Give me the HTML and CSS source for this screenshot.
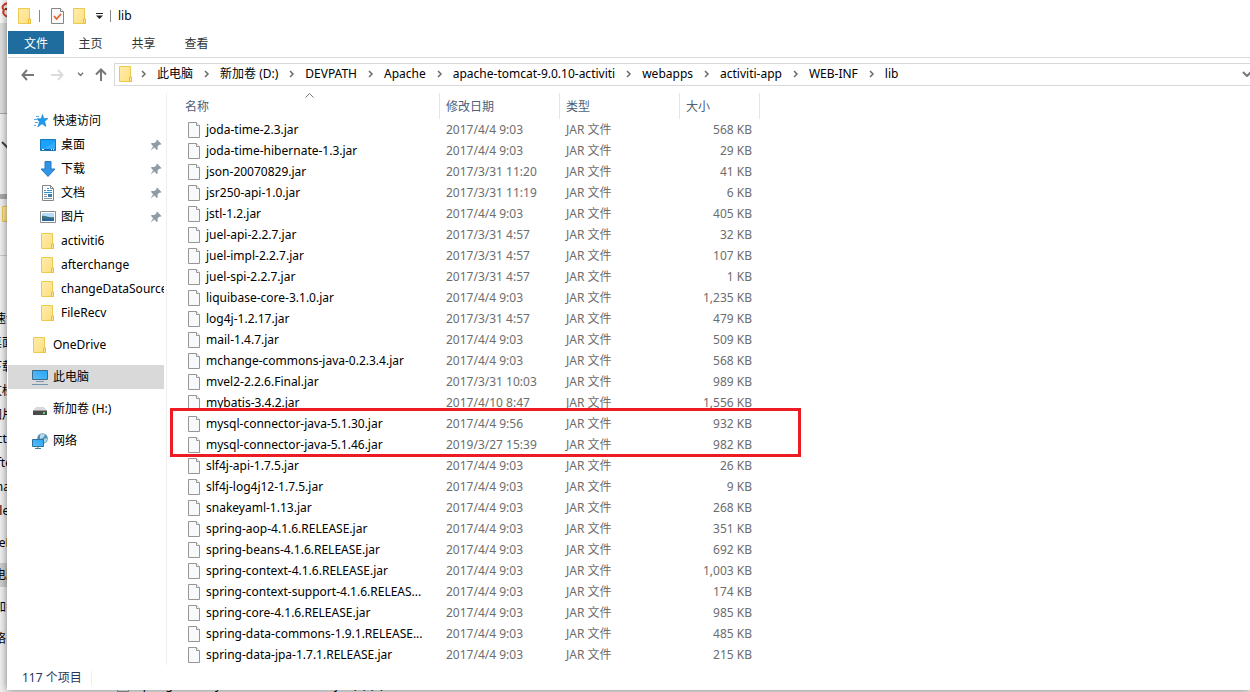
FILE: index.html
```
<!DOCTYPE html>
<html lang="zh-CN">
<head>
<meta charset="utf-8">
<title>lib</title>
<link rel="stylesheet" href="styles.css">
</head>
<body>
<svg class="defs" aria-hidden="true">
  <defs>
    <linearGradient id="g-folder" x1="0" y1="0" x2="1" y2="1"><stop offset="0" stop-color="#ffecac"/><stop offset="1" stop-color="#fedf7e"/></linearGradient>
    <linearGradient id="g-screen" x1="0" y1="1" x2="1" y2="0"><stop offset="0" stop-color="#5bbdf8"/><stop offset="1" stop-color="#27a6f5"/></linearGradient>
  </defs>
  <symbol id="folder" viewBox="0 0 14 16"><path d="M.5.5h11v10.500h1v4.500h-12z" fill="url(#g-folder)" stroke="#ecc94f"/><path d="M10.500 15.500v-4.500h2v4.500z" fill="#ffe79a" stroke="#e8bf3c"/></symbol>
  <symbol id="file" viewBox="0 0 12 16"><path d="M.5.5h8l3 3v12H.5z" fill="#f8f9fa" stroke="#969696"/><path d="M8.500.5v3h3" fill="#fff" stroke="#969696"/></symbol>
  <symbol id="chev" viewBox="0 0 6 8"><path d="M1 1l3 3-3 3" fill="none" stroke="#6b6b6b" stroke-width="1.500"/></symbol>
  <symbol id="pin" viewBox="0 0 12 12"><path d="M7 .5l4.500 4.500-1.200.8-1-.1-1.800 1.800.2 2.700-1 .8-2.300-2.500L.5 11.500 3.200 7.200.8 4.800l1-.9 2.700.1 2.100-1.700-.3-1z" fill="#8f9ba5"/></symbol>
</svg>

<div class="backdrop" aria-hidden="true">
  <div class="back-title"><svg width="16" height="20" viewBox="0 0 16 20"><path d="M8 3C3 4 1 7 4 10c-2 3 0 6 5 7" fill="#fff" stroke="#d6402c" stroke-width="2"/><path d="M5 9h8" stroke="#8c3a1e" stroke-width="2"/></svg></div>
  <div class="back-ribbon"></div>
  <div class="back-tools"><svg width="14" height="8" viewBox="0 0 14 8"><path d="M2 1l5 5 5-5" fill="none" stroke="#444" stroke-width="2"/></svg></div>
  <div class="back-address"><svg width="14" height="16"><use href="#folder"/></svg></div>
  <div class="back-nav">
    <span>快速访问</span><span class="sub">桌面</span><span class="sub">下载</span><span class="sub">文档</span><span class="sub">图片</span><span class="sub">activiti6</span><span class="sub">afterchange</span><span class="sub">changeDataSource</span><span class="sub">FileRecv</span>
    <span class="top">OneDrive</span><span class="top current">此电脑</span><span class="top">新加卷 (H:)</span><span class="top">网络</span>
  </div>
  <div class="back-foot"><svg width="12" height="16"><use href="#file"/></svg><span>spring-security-core-3.2.0.RELEASE.jar (1) (2)</span></div>
</div>

<div class="window">
  <header class="titlebar">
    <svg width="14" height="16"><use href="#folder"/></svg>
    <i class="sep"></i>
    <button class="icon-btn check" aria-label="属性"><svg width="13" height="16" viewBox="0 0 13 16"><path d="M.5.5h9l3 3v12H.5z" fill="#fafafa" stroke="#858585"/><path d="M9.500.5v3h3" fill="#fff" stroke="#858585"/><path d="M3 8l2.500 3L10 6" fill="none" stroke="#e8622c" stroke-width="1.800"/></svg></button>
    <button class="icon-btn" aria-label="新建文件夹"><svg width="14" height="16"><use href="#folder"/></svg></button>
    <button class="icon-btn more" aria-label="自定义快速访问工具栏"><svg width="7" height="6" viewBox="0 0 7 6"><path d="M0 .5h7" stroke="#222"/><path d="M0 2.500h7L3.500 6z" fill="#222"/></svg></button>
    <i class="sep"></i>
    <h1>lib</h1>
  </header>
  <nav class="tabs">
    <button class="active">文件</button><button>主页</button><button>共享</button><button>查看</button>
  </nav>
  <div class="address-row">
    <div class="history">
      <button aria-label="后退"><svg width="13" height="12" viewBox="0 0 13 12"><path d="M6 1L1.500 6 6 11M1.500 6H13" fill="none" stroke="#777" stroke-width="2"/></svg></button>
      <button class="forward" aria-label="前进"><svg width="13" height="12" viewBox="0 0 13 12"><path d="M7 1l4.500 5L7 11M0 6h11.500" fill="none" stroke="#dcdcdc" stroke-width="2"/></svg></button>
      <button class="recent" aria-label="最近位置"><svg width="7" height="5" viewBox="0 0 7 5"><path d="M1 .8l2.500 2.700L6 .8" fill="none" stroke="#777" stroke-width="1.500"/></svg></button>
      <button class="up" aria-label="上移"><svg width="12" height="13" viewBox="0 0 12 13"><path d="M1 6.500L6 1.500l5 5M6 1.500V13" fill="none" stroke="#777" stroke-width="2"/></svg></button>
    </div>
    <div class="address">
      <svg class="loc" width="14" height="16"><use href="#folder"/></svg>
      <svg class="chev" width="6" height="8"><use href="#chev"/></svg><a href="#">此电脑</a>
      <svg class="chev" width="6" height="8"><use href="#chev"/></svg><a href="#">新加卷 (D:)</a>
      <svg class="chev" width="6" height="8"><use href="#chev"/></svg><a href="#">DEVPATH</a>
      <svg class="chev" width="6" height="8"><use href="#chev"/></svg><a href="#">Apache</a>
      <svg class="chev" width="6" height="8"><use href="#chev"/></svg><a href="#">apache-tomcat-9.0.10-activiti</a>
      <svg class="chev" width="6" height="8"><use href="#chev"/></svg><a href="#">webapps</a>
      <svg class="chev" width="6" height="8"><use href="#chev"/></svg><a href="#">activiti-app</a>
      <svg class="chev" width="6" height="8"><use href="#chev"/></svg><a href="#">WEB-INF</a>
      <svg class="chev" width="6" height="8"><use href="#chev"/></svg><a href="#">lib</a>
      <button class="drop" aria-label="以前的位置"><svg width="8" height="6" viewBox="0 0 8 6"><path d="M1 1l4 4 4-4" fill="none" stroke="#777" stroke-width="2"/></svg></button>
    </div>
  </div>
  <div class="content">
    <aside class="side">
      <a href="#"><svg width="14" height="14" viewBox="0 0 14 14"><path d="M8.500.5l1.200 4H14l-3.300 2.800 1.200 5.200-3.900-2.800-4.200 3.300 1.700-5.200L3 4.700h4.200z" fill="#1d9bf0" stroke="#1c7fc4" stroke-width=".6"/><path d="M2 2.500h3M0 5.500h3M1 8.500h3M0 11.500h2" stroke="#54aee8"/></svg>快速访问</a>
      <a class="sub" href="#"><svg width="16" height="12" viewBox="0 0 16 12"><path d="M.5.5h15v11H.5z" fill="#1aa1fb" stroke="#1577bd"/><path d="M1 11L15 3v7H1z" fill="#36adfc"/><path d="M1 10.500h14" stroke="#0c67ad"/><path d="M2 10.500h2M11 10.500h1M13 10.500h1" stroke="#fff"/></svg>桌面<svg class="pin" width="12" height="12"><use href="#pin"/></svg></a>
      <a class="sub" href="#"><svg width="16" height="16" viewBox="0 0 16 16"><path d="M5 .5h6V8h4l-7 7.500L1 8h4z" fill="#3294e4" stroke="#2479c4"/></svg>下载<svg class="pin" width="12" height="12"><use href="#pin"/></svg></a>
      <a class="sub" href="#"><svg width="16" height="16" viewBox="0 0 16 16"><path d="M2.500.5h8l3 3v12h-11z" fill="#fff" stroke="#858585"/><path d="M10.500.5v3h3" fill="none" stroke="#858585"/><path d="M4 5.500h2M7 3.500h2M7 5.500h5M4 7.500h8" stroke="#2b93d8"/><path d="M4 9.500h3M4 11.500h3M4 13.500h8" stroke="#8a9aaa"/><path d="M8 9h4v3H8z" fill="#3f7fae"/></svg>文档<svg class="pin" width="12" height="12"><use href="#pin"/></svg></a>
      <a class="sub" href="#"><svg width="16" height="12" viewBox="0 0 16 12"><path d="M.5.5h15v11H.5z" fill="#fff" stroke="#8c8c8c"/><path d="M2 2h12v8H2z" fill="#b5dcf7"/><path d="M2 5c3-1 6 2 12 1v4H2z" fill="#3c7180"/><path d="M2 8c4 0 8-1 12 0v2H2z" fill="#2a659d"/></svg>图片<svg class="pin" width="12" height="12"><use href="#pin"/></svg></a>
      <a class="sub" href="#"><svg width="16" height="16"><use href="#folder"/></svg>activiti6</a>
      <a class="sub" href="#"><svg width="16" height="16"><use href="#folder"/></svg>afterchange</a>
      <a class="sub" href="#"><svg width="16" height="16"><use href="#folder"/></svg><span>changeDataSource</span></a>
      <a class="sub" href="#"><svg width="16" height="16"><use href="#folder"/></svg>FileRecv</a>
      <a class="top" href="#"><svg width="16" height="16"><use href="#folder"/></svg>OneDrive</a>
      <a class="top current" href="#"><svg width="16" height="16" viewBox="0 0 16 16"><path d="M.5 1.500h15v9H.5z" fill="url(#g-screen)" stroke="#3d6d8e"/><path d="M4 12.500h8" stroke="#7e98ab"/><path d="M0 15.500h16" stroke="#6f93b0"/></svg>此电脑</a>
      <a class="top" href="#"><svg width="16" height="16" viewBox="0 0 16 16"><path d="M4 6h8l2.500 3h-13z" fill="#d9d9d9"/><path d="M1 9h14v5H1z" fill="#4a4a4a"/><path d="M1 9.500h14" stroke="#999"/><path d="M11 11h2v2h-2z" fill="#4be36a"/></svg>新加卷 (H:)</a>
      <a class="top" href="#"><svg width="16" height="16" viewBox="0 0 16 16"><circle cx="10.500" cy="5.500" r="5.300" fill="#4f91b8"/><path d="M8 2c2-2 4-1 5 0l-2 3-3 1zM12 6l3-1c0 3-1 4-3 5z" fill="#b7d9e5"/><path d="M.5 6.500h11v7H.5z" fill="url(#g-screen)" stroke="#2e719e"/><path d="M3 15.500h6M6 13.500v2" stroke="#4c7ea0"/></svg>网络</a>
    </aside>
    <main class="files">
      <table>
        <colgroup><col class="c-name"><col class="c-date"><col class="c-type"><col class="c-size"></colgroup>
        <thead><tr><th aria-sort="ascending">名称<svg class="sort" width="9" height="5" viewBox="0 0 9 5"><path d="M.5 4.500l4-4 4 4" fill="none" stroke="#777"/></svg></th><th>修改日期</th><th>类型</th><th>大小</th></tr></thead>
        <tbody>
          <tr><td><svg><use href="#file"/></svg>joda-time-2.3.jar</td><td>2017/4/4 9:03</td><td>JAR 文件</td><td>568 KB</td></tr>
          <tr><td><svg><use href="#file"/></svg>joda-time-hibernate-1.3.jar</td><td>2017/4/4 9:03</td><td>JAR 文件</td><td>29 KB</td></tr>
          <tr><td><svg><use href="#file"/></svg>json-20070829.jar</td><td>2017/3/31 11:20</td><td>JAR 文件</td><td>41 KB</td></tr>
          <tr><td><svg><use href="#file"/></svg>jsr250-api-1.0.jar</td><td>2017/3/31 11:19</td><td>JAR 文件</td><td>6 KB</td></tr>
          <tr><td><svg><use href="#file"/></svg>jstl-1.2.jar</td><td>2017/4/4 9:03</td><td>JAR 文件</td><td>405 KB</td></tr>
          <tr><td><svg><use href="#file"/></svg>juel-api-2.2.7.jar</td><td>2017/3/31 4:57</td><td>JAR 文件</td><td>32 KB</td></tr>
          <tr><td><svg><use href="#file"/></svg>juel-impl-2.2.7.jar</td><td>2017/3/31 4:57</td><td>JAR 文件</td><td>107 KB</td></tr>
          <tr><td><svg><use href="#file"/></svg>juel-spi-2.2.7.jar</td><td>2017/3/31 4:57</td><td>JAR 文件</td><td>1 KB</td></tr>
          <tr><td><svg><use href="#file"/></svg>liquibase-core-3.1.0.jar</td><td>2017/4/4 9:03</td><td>JAR 文件</td><td>1,235 KB</td></tr>
          <tr><td><svg><use href="#file"/></svg>log4j-1.2.17.jar</td><td>2017/3/31 4:57</td><td>JAR 文件</td><td>479 KB</td></tr>
          <tr><td><svg><use href="#file"/></svg>mail-1.4.7.jar</td><td>2017/4/4 9:03</td><td>JAR 文件</td><td>509 KB</td></tr>
          <tr><td><svg><use href="#file"/></svg>mchange-commons-java-0.2.3.4.jar</td><td>2017/4/4 9:03</td><td>JAR 文件</td><td>568 KB</td></tr>
          <tr><td><svg><use href="#file"/></svg>mvel2-2.2.6.Final.jar</td><td>2017/3/31 10:03</td><td>JAR 文件</td><td>989 KB</td></tr>
          <tr><td><svg><use href="#file"/></svg>mybatis-3.4.2.jar</td><td>2017/4/10 8:47</td><td>JAR 文件</td><td>1,556 KB</td></tr>
          <tr><td><svg><use href="#file"/></svg>mysql-connector-java-5.1.30.jar</td><td>2017/4/4 9:56</td><td>JAR 文件</td><td>932 KB</td></tr>
          <tr><td><svg><use href="#file"/></svg>mysql-connector-java-5.1.46.jar</td><td>2019/3/27 15:39</td><td>JAR 文件</td><td>982 KB</td></tr>
          <tr><td><svg><use href="#file"/></svg>slf4j-api-1.7.5.jar</td><td>2017/4/4 9:03</td><td>JAR 文件</td><td>26 KB</td></tr>
          <tr><td><svg><use href="#file"/></svg>slf4j-log4j12-1.7.5.jar</td><td>2017/4/4 9:03</td><td>JAR 文件</td><td>9 KB</td></tr>
          <tr><td><svg><use href="#file"/></svg>snakeyaml-1.13.jar</td><td>2017/4/4 9:03</td><td>JAR 文件</td><td>268 KB</td></tr>
          <tr><td><svg><use href="#file"/></svg>spring-aop-4.1.6.RELEASE.jar</td><td>2017/4/4 9:03</td><td>JAR 文件</td><td>351 KB</td></tr>
          <tr><td><svg><use href="#file"/></svg>spring-beans-4.1.6.RELEASE.jar</td><td>2017/4/4 9:03</td><td>JAR 文件</td><td>692 KB</td></tr>
          <tr><td><svg><use href="#file"/></svg>spring-context-4.1.6.RELEASE.jar</td><td>2017/4/4 9:03</td><td>JAR 文件</td><td>1,003 KB</td></tr>
          <tr><td><svg><use href="#file"/></svg>spring-context-support-4.1.6.RELEAS...</td><td>2017/4/4 9:03</td><td>JAR 文件</td><td>174 KB</td></tr>
          <tr><td><svg><use href="#file"/></svg>spring-core-4.1.6.RELEASE.jar</td><td>2017/4/4 9:03</td><td>JAR 文件</td><td>985 KB</td></tr>
          <tr><td><svg><use href="#file"/></svg>spring-data-commons-1.9.1.RELEASE...</td><td>2017/4/4 9:03</td><td>JAR 文件</td><td>485 KB</td></tr>
          <tr><td><svg><use href="#file"/></svg>spring-data-jpa-1.7.1.RELEASE.jar</td><td>2017/4/4 9:03</td><td>JAR 文件</td><td>215 KB</td></tr>
        </tbody>
      </table>
      <div class="highlight"></div>
    </main>
  </div>
  <footer class="status"><span>117 个项目</span></footer>
</div>
</body>
</html>
```
FILE: styles.css
```
* { box-sizing: border-box; }
body {
  margin: 0;
  position: relative;
  min-height: 100vh;
  overflow: hidden;
  background: #f0f0f0;
  font: 12px/20px "Noto Sans", "Noto Sans CJK SC", sans-serif;
  color: #000;
}
.defs { position: absolute; width: 0; height: 0; }
svg { display: block; flex: none; }
button { border: 0; padding: 0; background: none; font: inherit; color: inherit; }
a { color: inherit; text-decoration: none; }

.backdrop {
  position: absolute;
  inset: 0;
  overflow: hidden;
  background: #f0f0f0;
}
.back-title { height: 23px; background: #fafafa; }
.back-ribbon { height: 91px; background: #e0e0e0; border-bottom: 1px solid #aaa; }
.back-tools { height: 85px; padding-top: 27px; border-bottom: 5px solid #aaa; }
.back-address { height: 57px; padding: 7px 0 0 2px; border-bottom: 1px solid #ccc; }
.back-nav { display: flex; flex-direction: column; padding-top: 51px; }
.back-nav span { height: 24px; line-height: 24px; text-indent: -18px; white-space: nowrap; }
.back-nav .sub { text-indent: -10px; }
.back-nav .top { margin-top: 8px; }
.back-nav .current { background: #cfcfcf; }
.back-foot {
  position: absolute;
  left: 117px;
  bottom: 0;
  display: flex;
  gap: 8px;
  align-items: flex-end;
  line-height: 14px;
}

.window {
  position: relative;
  margin-left: 7px;
  height: calc(100vh - 2px);
  display: flex;
  flex-direction: column;
  background: #fff;
  border-left: 1px solid #fff;
  box-shadow: 0 0 8px rgba(0, 0, 0, .5);
}
.titlebar { display: flex; align-items: center; height: 31px; padding-left: 10px; }
.sep { width: 1px; height: 12px; margin: 0 11px 0 7px; background: #888; }
.icon-btn { margin-right: 9px; }
.icon-btn.more { margin-right: 0; }
.titlebar h1 { margin: 0 0 0 -4px; font-size: 12px; font-weight: 400; }

.tabs { display: flex; height: 27px; padding-bottom: 3px; border-bottom: 1px solid #dadbdc; }
.tabs button { width: 53px; padding-top: 2px; color: #333; }
.tabs button.active { width: 56px; background: #1f6c9f; color: #fff; }

.address-row { display: flex; align-items: center; height: 35px; padding-bottom: 2px; }
.history { display: flex; align-items: center; width: 106px; padding-left: 13px; }
.history .forward { margin-left: 17px; }
.history .recent { margin-left: 13px; }
.history .up { margin-left: 11px; }
.address {
  flex: 1;
  display: flex;
  align-items: center;
  height: 23px;
  padding: 0 0 2px 4px;
  border: 1px solid #d9d9d9;
  border-right: 0;
  overflow: hidden;
  white-space: nowrap;
}
.address .chev { margin: 0 10px 0 11px; }
.address .loc + .chev { margin-left: 8px; }
.address .drop { margin-left: auto; }

.content { flex: 1; display: flex; min-height: 0; }
.side {
  flex: none;
  width: 159px;
  padding: 16px 2px 0 0;
  border-right: 1px solid #f0f0f0;
  overflow: hidden;
}
.side a {
  display: flex;
  align-items: center;
  gap: 5px;
  height: 24px;
  padding-left: 24px;
  white-space: nowrap;
  overflow: hidden;
}
.side a:first-child { padding-left: 26px; }
.side .sub { padding-left: 32px; }
.side .top { margin-top: 8px; }
.side .current { background: #d9d9d9; }
.side .pin { margin: 0 2px 0 auto; }

.files { position: relative; flex: 1; min-width: 0; padding-left: 12px; }
table { border-collapse: separate; border-spacing: 0; table-layout: fixed; width: 581px; }
.c-name { width: 261px; }
.c-date, .c-type { width: 120px; }
.c-size { width: 80px; }
th {
  position: relative;
  height: 26px;
  padding: 1px 6px 0;
  border-right: 1px solid #e5e5e5;
  color: #4c607a;
  font-weight: 400;
  text-align: left;
}
.sort { position: absolute; top: 0; left: calc(50% - 4px); }
td { height: 21px; padding: 0 6px; line-height: 21px; color: #6d6d6d; white-space: nowrap; }
td:first-child { display: flex; align-items: center; gap: 6px; padding: 0 0 0 9px; color: #000; }
td:last-child { padding-right: 8px; text-align: right; }
td svg { width: 12px; height: 16px; }
.highlight {
  position: absolute;
  left: 3px;
  top: 315px;
  width: 631px;
  height: 49px;
  border: 3px solid #ed1c24;
}

.status { display: flex; align-items: center; height: 25px; padding-left: 14px; color: #1e395b; }
.status span { padding-right: 9px; border-right: 1px solid #eee; line-height: 14px; }
```
